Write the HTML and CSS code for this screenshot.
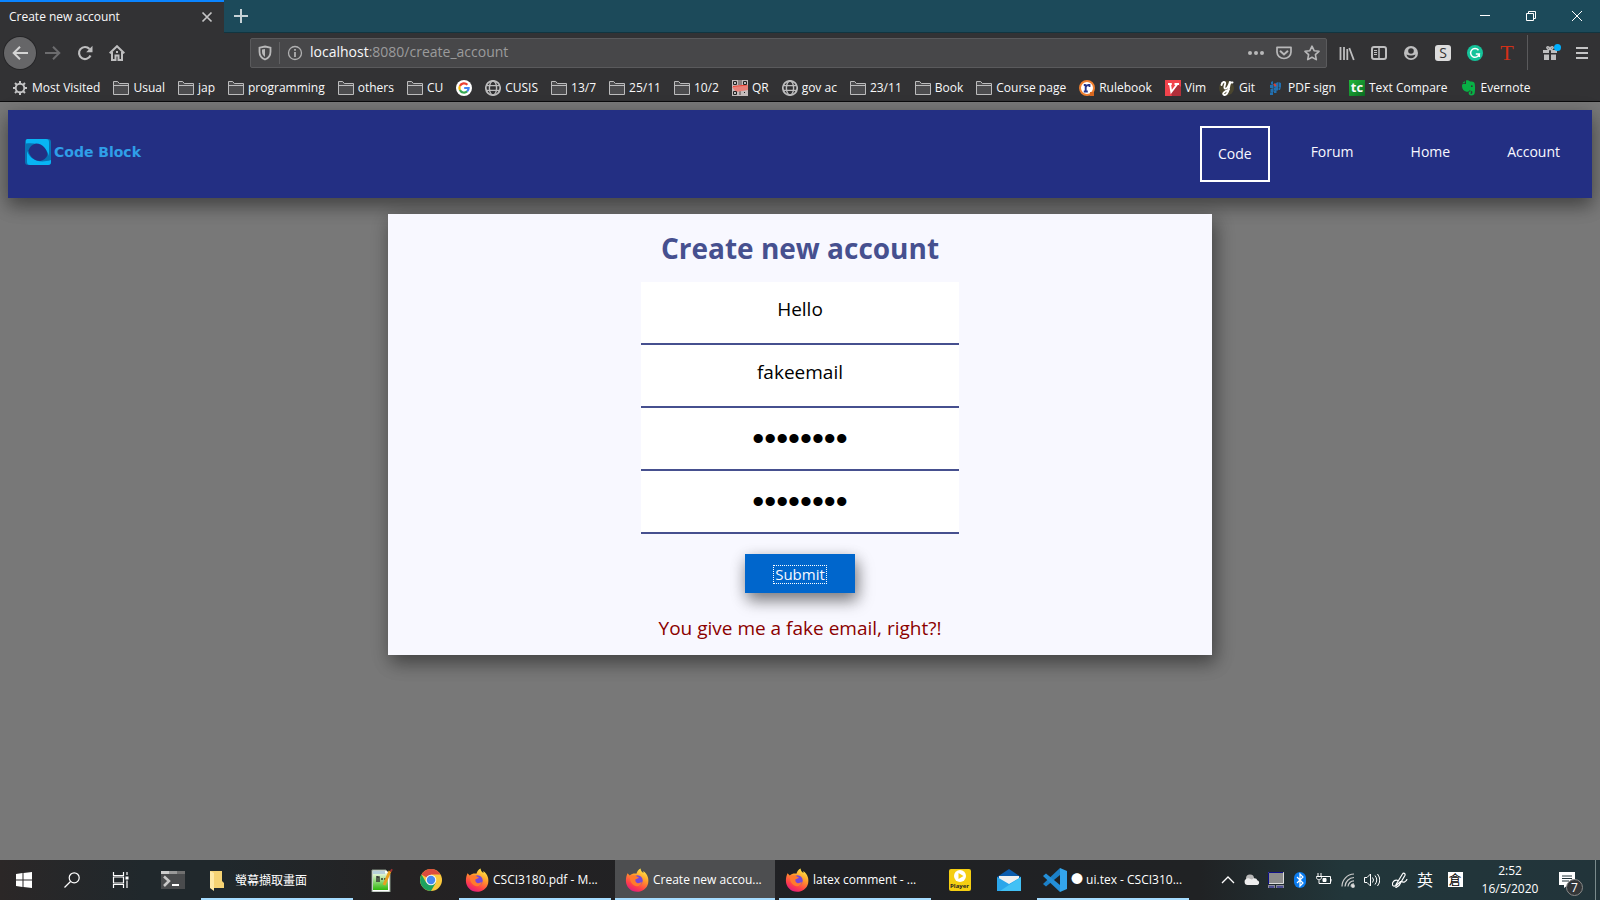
FILE: index.html
```html
<!DOCTYPE html>
<html lang="en">
<head>
<meta charset="utf-8">
<title>Create new account</title>
<link rel="stylesheet" href="styles.css">
</head>
<body>
<svg class="defs" aria-hidden="true">
  <defs>
    <linearGradient id="fxg" x1="0.8" y1="0" x2="0.3" y2="1"><stop offset="0" stop-color="#fff04a"/><stop offset=".4" stop-color="#ff9a2a"/><stop offset=".75" stop-color="#ff4048"/><stop offset="1" stop-color="#e01a80"/></linearGradient>
    <linearGradient id="npg" x1="0" y1="0" x2="0" y2="1"><stop offset="0" stop-color="#eef8e0"/><stop offset="1" stop-color="#2fb80c"/></linearGradient>
    <symbol id="folder" viewBox="0 0 16 16"><path d="M.5 14.500v-13h4.200l1.600 2h9.200v11z" fill="#4c4c4e" stroke="#bcbcbd"/><path d="M.5 5.500h15" stroke="#bcbcbd"/></symbol>
    <symbol id="globe" viewBox="0 0 16 16"><g fill="none" stroke="#bcbcbd" stroke-width="1.4"><circle cx="8" cy="8" r="7.2" stroke-width="1.7"/><ellipse cx="8" cy="8" rx="3.6" ry="7"/><path d="M1 5.6h14M1 10.4h14"/></g></symbol>
    <symbol id="firefox" viewBox="0 0 24 24"><path d="M2.500 5.200l2.300 2.200C7 5.500 9.300 5.200 11.400 5.700 12.200 3.200 13.500 1.500 15.700.6c-.1 2 .8 3 2.700 4.500.1-.6.1-1.300-.2-2 4.800 3.400 5.800 8.200 4.900 12.400-1.200 5-5.700 8.300-11 8.300C5.800 23.800.9 19 .9 12.800c0-2.800.6-5.400 1.600-7.600z" fill="url(#fxg)"/><circle cx="12.500" cy="12.500" r="5.200" fill="#7547d8"/><path d="M5 8.500c2-1.500 4.500-1.500 6.500-.3L14 9.500c-1 1-2.300 1.400-3.300 1.600-.8 1.500-.2 3.800 2 4.200 1.700.2 3-.8 4-1.200 0 3-3 4.500-5.200 4.100C7 17.500 4.500 13 5 8.500z" fill="#ff7a2c"/></symbol>
  </defs>
</svg>

<div class="browser">
  <div class="tabbar">
    <div class="tab"><span>Create new account</span>
      <button class="icon-btn" aria-label="Close tab"><svg width="12" height="12" viewBox="0 0 12 12"><path d="M1.500 1.500l9 9m0-9l-9 9" stroke="#c4c4c5" stroke-width="1.700"/></svg></button>
    </div>
    <button class="icon-btn new-tab" aria-label="New tab"><svg width="14" height="14" viewBox="0 0 14 14"><path d="M7 0v14M0 7h14" stroke="#c6d2d6" stroke-width="2"/></svg></button>
    <div class="window-controls">
      <button class="icon-btn" aria-label="Minimize"><svg width="10" height="10" viewBox="0 0 10 10"><path d="M0 4.500h10" stroke="#fff"/></svg></button>
      <button class="icon-btn" aria-label="Restore"><svg width="10" height="10" viewBox="0 0 10 10" fill="none" stroke="#fff"><path d="M.5 2.500h7v7h-7zM2.500 2V.5h7v7H8"/></svg></button>
      <button class="icon-btn" aria-label="Close"><svg width="10" height="10" viewBox="0 0 10 10"><path d="M0 0l10 10M10 0L0 10" stroke="#fff"/></svg></button>
    </div>
  </div>

  <div class="toolbar">
    <button class="icon-btn back" aria-label="Back"><svg width="16" height="14" viewBox="0 0 16 14" fill="none" stroke="#d4d4d4" stroke-width="2"><path d="M1.500 7H16M8 .8L1.700 7 8 13.200"/></svg></button>
    <button class="icon-btn" aria-label="Forward"><svg width="16" height="14" viewBox="0 0 16 14" fill="none" stroke="#6c6c6e" stroke-width="2"><path d="M0 7h14.500M8 .8L14.300 7 8 13.200"/></svg></button>
    <button class="icon-btn" aria-label="Reload"><svg width="16" height="16" viewBox="0 0 16 16"><path d="M13.500 10.500A6 6 0 1 1 12.500 4" fill="none" stroke="#bebebf" stroke-width="2.200"/><path d="M15.500 .8v6.400H9.200z" fill="#bebebf"/></svg></button>
    <button class="icon-btn" aria-label="Home"><svg width="16" height="16" viewBox="0 0 16 16"><path d="M.7 8.300L8 1.200l7.300 7.100" fill="none" stroke="#bebebf" stroke-width="2"/><path d="M3 7v8h3.500v-4.500h3V15H13V7" fill="none" stroke="#bebebf" stroke-width="2"/><path d="M7 6h2v2H7z" fill="#bebebf"/></svg></button>
    <div class="urlbar">
      <svg width="14" height="16" viewBox="0 0 14 16"><path d="M7 1.500l5.500 1.200v4c0 3.600-2 6.400-5.500 7.800-3.500-1.400-5.500-4.200-5.500-7.800v-4z" fill="none" stroke="#b8b8b9" stroke-width="1.800"/><path d="M7 4v8C4.800 10.600 4 9 4 6.600v-2z" fill="#b8b8b9"/></svg>
      <i class="url-sep"></i>
      <svg width="16" height="16" viewBox="0 0 16 16"><circle cx="8" cy="8" r="6.500" fill="none" stroke="#b0b0b1" stroke-width="1.300"/><path d="M7.100 7h1.800v5H7.100zM7.100 4h1.800v1.800H7.100z" fill="#b0b0b1"/></svg>
      <span class="url"><b>localhost</b>:8080/create_account</span>
      <button class="icon-btn" aria-label="Page actions"><svg width="16" height="16" viewBox="0 0 16 16" fill="#b8b8b9"><circle cx="2" cy="8" r="2"/><circle cx="8" cy="8" r="2"/><circle cx="14" cy="8" r="2"/></svg></button>
      <button class="icon-btn" aria-label="Save to Pocket"><svg width="16" height="16" viewBox="0 0 16 16" fill="none" stroke="#b8b8b9" stroke-width="1.700"><path d="M1 2.300h14v4.700a7 6.500 0 0 1-14 0z" stroke-linejoin="round"/><path d="M4.500 6.300L8 9.500l3.500-3.200" stroke-width="2" stroke-linecap="round"/></svg></button>
      <button class="icon-btn" aria-label="Bookmark this page"><svg width="16" height="16" viewBox="0 0 16 16"><path d="M8 1.200l2.100 4.500 4.900.6-3.600 3.400.9 4.900L8 12.200l-4.300 2.400.9-4.900L1 6.300l4.900-.6z" fill="none" stroke="#b8b8b9" stroke-width="1.600" stroke-linejoin="round"/></svg></button>
    </div>
    <div class="extensions">
      <button class="icon-btn" aria-label="Library"><svg width="16" height="16" viewBox="0 0 16 16" stroke="#bebebf" stroke-width="1.800"><path d="M1.500 2v13M5 2v13M8.300 4v11M10.300 3l4.500 12"/></svg></button>
      <button class="icon-btn" aria-label="Sidebars"><svg width="16" height="14" viewBox="0 0 16 14" fill="none" stroke="#bebebf"><rect x="1" y="1" width="14" height="12" rx="2" stroke-width="2"/><path d="M8 1v12" stroke-width="1.500"/><path d="M3 4.500h3M3 6.500h3M3 8.500h3"/></svg></button>
      <button class="icon-btn" aria-label="Account"><svg width="14" height="14" viewBox="0 0 14 14"><circle cx="7" cy="7" r="7" fill="#bebebf"/><circle cx="7" cy="5" r="2.800" fill="#323234"/><path d="M2.500 8.500c2.500 1.400 6.500 1.400 9 0-.4 2.400-2 3.700-4.500 3.700s-4.100-1.300-4.500-3.700z" fill="#323234"/></svg></button>
      <button class="icon-btn ext-s" aria-label="S extension">S</button>
      <button class="icon-btn" aria-label="Grammar"><svg width="16" height="16" viewBox="0 0 16 16"><circle cx="8" cy="8" r="8" fill="#15c39a"/><path d="M11.500 5.200A4.400 4.400 0 1 0 12.300 9H8.800M12.300 8.500v3.500" fill="none" stroke="#fff" stroke-width="1.500"/></svg></button>
      <button class="icon-btn ext-t" aria-label="T extension">T</button>
    </div>
    <div class="menus">
      <button class="icon-btn gift" aria-label="What's new"><svg width="16" height="16" viewBox="0 0 16 16"><path d="M1 5h6v3H1zM9 5h6v3H9zM2 9.500h5V15H2zM9 9.500h5V15H9z" fill="#bebebf"/><path d="M7.500 5C4 4 4.500 1.500 6 1.800 7.500 2 8 5 8 5s.5-3 2-3.200C11.500 1.500 12 4 8.500 5" stroke="#bebebf" fill="none" stroke-width="1.500"/></svg><i class="dot"></i></button>
      <button class="icon-btn" aria-label="Menu"><svg width="12" height="12" viewBox="0 0 12 12"><path d="M0 1h12M0 6h12M0 11h12" stroke="#c4c4c5" stroke-width="2"/></svg></button>
    </div>
  </div>

  <nav class="bookmarks" aria-label="Bookmarks">
    <a href="#"><svg viewBox="0 0 16 16"><circle cx="8" cy="8" r="4.300" fill="none" stroke="#c4c4c5" stroke-width="1.900"/><path d="M8 1v2.500M8 12.500V15M1 8h2.500M12.500 8H15M3 3l1.900 1.900M11.100 11.100L13 13M13 3l-1.900 1.900M4.900 11.100L3 13" stroke="#c4c4c5" stroke-width="2"/></svg>Most Visited</a>
    <a href="#"><svg><use href="#folder"/></svg>Usual</a>
    <a href="#"><svg><use href="#folder"/></svg>jap</a>
    <a href="#"><svg><use href="#folder"/></svg>programming</a>
    <a href="#"><svg><use href="#folder"/></svg>others</a>
    <a href="#"><svg><use href="#folder"/></svg>CU</a>
    <a href="#" aria-label="Google"><svg viewBox="0 0 16 16"><circle cx="8" cy="8" r="8" fill="#fff"/><g fill="none" stroke-width="2.200"><path d="M11.400 4.800A4.600 4.600 0 0 0 3.900 6" stroke="#ea4335"/><path d="M3.900 6a4.600 4.600 0 0 0 0 4.100" stroke="#fbbc05"/><path d="M3.900 10a4.600 4.600 0 0 0 7.200 1.400" stroke="#34a853"/><path d="M11.100 11.400A4.600 4.600 0 0 0 12.600 8H8.200" stroke="#4285f4"/></g></svg></a>
    <a href="#"><svg><use href="#globe"/></svg>CUSIS</a>
    <a href="#"><svg><use href="#folder"/></svg>13/7</a>
    <a href="#"><svg><use href="#folder"/></svg>25/11</a>
    <a href="#"><svg><use href="#folder"/></svg>10/2</a>
    <a href="#"><svg viewBox="0 0 16 16"><path d="M0 0h16v16H0z" fill="#c4bcbc"/><path d="M6 0h4v5H6zM3 7h4v3H3zM7 11h2v4H7z" fill="#8a8080"/><path d="M0 7l16-2v5L4 12z" fill="#e88078"/><path d="M1 6.500l14-1.500" stroke="#f04030"/><g fill="#eee" stroke="#222"><path d="M1.500 1.500h3v3h-3zM11.500 1.500h3v3h-3zM1.500 11.500h3v3h-3z"/></g><path d="M2.500 2.500h1v1h-1zM12.500 2.500h1v1h-1zM2.500 12.500h1v1h-1zM12 12h1v1h-1z" fill="#222"/></svg>QR</a>
    <a href="#"><svg><use href="#globe"/></svg>gov ac</a>
    <a href="#"><svg><use href="#folder"/></svg>23/11</a>
    <a href="#"><svg><use href="#folder"/></svg>Book</a>
    <a href="#"><svg><use href="#folder"/></svg>Course page</a>
    <a href="#"><svg viewBox="0 0 16 16"><circle cx="8" cy="8" r="7" fill="#fff" stroke="#f08030" stroke-width="2"/><path d="M11 12h4v4h-4z" fill="#d86820"/><path d="M6.700 12V4.500M4.800 5h2M4.800 11.500h4M6.800 7c.8-2 2.500-2.300 3.700-2v2" fill="none" stroke="#27368c" stroke-width="1.900"/></svg>Rulebook</a>
    <a href="#"><svg viewBox="0 0 16 16"><path d="M0 0h16v16H0z" fill="#f2434c"/><path d="M13 4l3 3v9H7l-1-3z" fill="#b02f3a"/><path d="M3 4h3.800M5 4l1.300 8L12 4.500M9.500 4H14" fill="none" stroke="#fff" stroke-width="1.900"/></svg>Vim</a>
    <a href="#"><svg viewBox="0 0 16 16"><circle cx="7.500" cy="8" r="7.500" fill="#4a452e"/><path d="M2.500 5C3 1.500 6.500 1 6.200 3.500c-.2 2-1.700 4.200-.3 5 2 .8 4-2.500 5-6.500M13.500 2.500c-3-.8-3 3-3.700 6C9 13 7 15.500 5 14.800c-2-.8-.3-3.500 5-5.200" fill="none" stroke="#fff" stroke-width="1.900" stroke-linecap="round"/></svg>Git</a>
    <a href="#"><svg viewBox="0 0 16 16"><path d="M3 2l2-1v3H3zM6 4l4-2v5H6zM10.500 2l2.500 1v4h-2.500zM2 5l3.500-1v4H2zM6 7.500l4-1v4H6zM10.500 7.500L13 7l-1 3h-1.500zM2.500 9l3-1v4h-3zM6 11l2.500-1v3H6zM2 12.500l3-.5v3H2z" fill="#2270b0"/><path d="M6 4l2 2" stroke="#e04030" stroke-width="1.800"/></svg>PDF sign</a>
    <a href="#"><span class="tc">tc</span>Text Compare</a>
    <a href="#"><svg viewBox="0 0 16 16"><path d="M5 .5C7 0 8.500.8 9 1.600c2 .1 4 .3 4.500 1.300.7 2 .7 6.600.3 9.600-.3 2.200-1.300 3-3.300 3-2.300 0-3.200-1.500-2.800-3 .3-1 1.300-1.500 2.500-1.300v1.300c-1 .1-1.200 1.200 0 1.300 1.200 0 1.300-1 1-2.600-1-.6-2-.7-3-.8-.5 1.300-1.500 1.500-2.500 1.300C2.500 11.200 1 9 1 6c0-1.500.5-2 1.500-2H5z" fill="#08b045"/><path d="M3.800 1L1.300 3.300h2.500z" fill="#08b045"/><circle cx="10.800" cy="6.200" r=".9" fill="#323234"/></svg>Evernote</a>
  </nav>
</div>

<main class="page">
  <header class="site-header">
    <a class="logo" href="#"><svg width="26" height="26" viewBox="0 0 26 26"><rect width="26" height="26" rx="3" fill="#0873b4"/><path d="M2 0h19a3 3 0 0 1 3 3v14C22 8 13 3 1 4.500V1zM2 12v11a3 3 0 0 0 3 3h18a3 3 0 0 0 3-3v-2C13 25 5 20 2 12z" fill="#08b4f4"/><path d="M11 4.500c7 0 11 6 11.500 11.500-1 3-3.500 5-7 6C8 22 4 16 3.500 11.500 4.500 8 7 5.500 11 4.500z" fill="#232f83"/></svg><span>Code Block</span></a>
    <nav class="site-nav">
      <a class="active" href="#">Code</a><a href="#">Forum</a><a href="#">Home</a><a href="#">Account</a>
    </nav>
  </header>
  <form class="card">
    <h1>Create new account</h1>
    <input type="text" aria-label="User name" value="Hello">
    <input type="text" aria-label="Email" value="fakeemail">
    <input type="password" aria-label="Password" value="password">
    <input type="password" aria-label="Confirm password" value="password">
    <button class="submit" type="button"><span>Submit</span></button>
    <p class="error">You give me a fake email, right?!</p>
  </form>
</main>

<footer class="taskbar">
  <div class="system">
    <button class="sys" aria-label="Start"><svg width="16" height="16" viewBox="0 0 16 16" fill="#fff"><path d="M0 2l6.500-1v6.500H0zM7.500 1L16 0v7.500H7.500zM0 8.500h6.500V15L0 14zM7.500 8.500H16V16l-8.500-1z"/></svg></button>
    <button class="sys" aria-label="Search"><svg width="16" height="16" viewBox="0 0 16 16" fill="none" stroke="#fff" stroke-width="1.200"><circle cx="10.200" cy="5.800" r="5"/><path d="M6.500 9.500L.5 15.500"/></svg></button>
    <button class="sys" aria-label="Task view"><svg width="17" height="16" viewBox="0 0 17 16" fill="none" stroke="#fff" stroke-width="1.200"><path d="M1.500 0v3.500h10V0M1.500 16v-3.500h10V16M1.500 5h10v6h-10zM15 0v3M15 8.500V16"/><path d="M13.500 4.500h3v3h-3z" fill="#fff" stroke="none"/></svg></button>
  </div>
  <button class="app" aria-label="Terminal"><svg width="24" height="18" viewBox="0 0 24 18"><path d="M0 0h24v18H0z" fill="#494b4d"/><path d="M0 0h8v3H0z" fill="#ccc"/><path d="M8 0h8v3H8z" fill="#999"/><path d="M16 0h8v3h-8z" fill="#707070"/><path d="M3 5.500L8 10l-5 5" fill="none" stroke="#c8c8c8" stroke-width="2.500"/><path d="M11 14h7" stroke="#fff" stroke-width="2"/></svg></button>
  <button class="task"><svg width="24" height="24" viewBox="0 0 24 24"><path d="M3 3h12v10l2 2v5H5z" fill="#f6d374"/><path d="M3 3l4 2v18l-4-3z" fill="#ffe9a6"/></svg><span class="cjk">螢幕擷取畫面</span></button>
  <button class="app" aria-label="Notepad++"><svg width="24" height="24" viewBox="0 0 24 24"><path d="M2 2h14l4 4v18H2z" fill="#fff" stroke="#8a9a8a"/><path d="M3 5h15v17H3z" fill="url(#npg)"/><path d="M3 3h12v3H3z" fill="#b8d0da"/><path d="M7 8v6M7 9h2v5M11 11h2M14 11h2" stroke="#333" fill="none" stroke-width="1.500"/><path d="M20 3l-6 14" stroke="#e8a020" stroke-width="3"/><path d="M20.500 2l1.500 1" stroke="#a03030" stroke-width="3"/></svg></button>
  <button class="app" aria-label="Chrome"><svg width="22" height="22" viewBox="0 0 22 22"><circle cx="11" cy="11" r="11" fill="#fbc93d"/><path d="M11 11L1.500 5.500A11 11 0 0 1 20.500 5.500H11z" fill="#dd4b3e"/><path d="M1.500 5.500A11 11 0 0 0 11 22l4.800-8.300L11 11 6.300 13.800z" fill="#1da15f"/><circle cx="11" cy="11" r="5.300" fill="#f5f5f5"/><circle cx="11" cy="11" r="4.200" fill="#4688f0"/></svg></button>
  <button class="task"><svg width="24" height="24"><use href="#firefox"/></svg><span>CSCI3180.pdf - M...</span></button>
  <button class="task current"><svg width="24" height="24"><use href="#firefox"/></svg><span>Create new accou...</span></button>
  <button class="task"><svg width="24" height="24"><use href="#firefox"/></svg><span>latex comment - ...</span></button>
  <button class="app" aria-label="Player"><span class="player"><svg width="14" height="14" viewBox="0 0 14 14"><circle cx="7" cy="7" r="6" fill="#fff"/><path d="M5.500 4l5 3-5 3z" fill="#f5ce12"/></svg>Player</span></button>
  <button class="app" aria-label="Mail"><svg width="24" height="22" viewBox="0 0 24 22"><path d="M0 8L12 0l12 8v14H0z" fill="#0b5cad"/><path d="M2 7h20v10H2z" fill="#f0f0f0"/><path d="M0 8l12 7L24 8v14H0z" fill="#2ba6ea"/><path d="M24 8v14H3z" fill="#42c1f5"/></svg></button>
  <button class="task"><svg width="24" height="24" viewBox="0 0 24 24"><path d="M17 0l7 3v18l-7 3z" fill="#33a5ec"/><path d="M17 0v7L3 18.500 0 16z" fill="#1c80c8"/><path d="M3 5.500L17 17v7L0 8z" fill="#248fd8"/></svg><span>● ui.tex - CSCI310...</span></button>

  <div class="tray">
    <button class="tray-btn" aria-label="Show hidden icons"><svg viewBox="0 0 16 16"><path d="M2 11l6-6 6 6" fill="none" stroke="#fff" stroke-width="1.300"/></svg></button>
    <button class="tray-btn" aria-label="OneDrive"><svg viewBox="0 0 16 16"><circle cx="6" cy="6.500" r="4" fill="#b8b8b8"/><path d="M3.500 13a3.300 3.300 0 0 1-.3-6.500C5 5.500 7 7.500 8 7.500c2-2.500 5-1 5.200.7A2.500 2.500 0 0 1 13.500 13z" fill="#eee"/></svg></button>
    <button class="tray-btn" aria-label="Device"><svg viewBox="0 0 16 16"><path d="M.5.500h15v11H.5z" fill="#8c8c8c" stroke="#ddd"/><path d="M.5 12V.500H15" fill="none" stroke="#10108a"/><path d="M0 13h7v3H0zM8 13h8v3H8z" fill="#8c8c9c"/><path d="M1 15h5M9 15h6" stroke="#10108a"/></svg></button>
    <button class="tray-btn" aria-label="Bluetooth"><svg viewBox="0 0 16 16"><rect x="2" width="12" height="16" rx="6" fill="#0a7cf0"/><path d="M5 5l6 6-3 3V2l3 3-6 6" fill="none" stroke="#fff" stroke-width="1.200"/></svg></button>
    <button class="tray-btn" aria-label="Battery"><svg viewBox="0 0 16 16" fill="none" stroke="#fff"><path d="M5 4.500h9.500v7h-9.500M15 7v2.500M2 1v3M5 1v3M.5 4.500h5c0 3-1 3-2.500 3s-2.500 0-2.500-3M3 8v3.500h2"/><path d="M7 6.500h3v3H7z" fill="#fff"/></svg></button>
    <button class="tray-btn" aria-label="Network"><svg viewBox="0 0 16 16" fill="none" stroke="#ccc" stroke-width="1.200"><path d="M2 14.500A12.500 12.500 0 0 1 14 2M5 14.500A9.500 9.500 0 0 1 14 5.500M8 14.500A6 6 0 0 1 14 8.800M11 14.500A3 3 0 0 1 14 11.800"/><circle cx="13" cy="14" r="1.300" fill="#fff"/></svg></button>
    <button class="tray-btn" aria-label="Volume"><svg viewBox="0 0 16 16" fill="none" stroke="#fff"><path d="M.5 5.500h2.500L6.500 2v12L3 10.500H.5zM8.500 5.500q2 2.500 0 5M11 3.500q3.500 4.500 0 9M13.500 2q4.500 6 0 12"/></svg></button>
    <button class="tray-btn wide" aria-label="Pen"><svg viewBox="0 0 16 16" fill="none" stroke="#fff" stroke-width="1.200"><path d="M4 12.500L10.500 2c1-1.500 3-.5 2.500 1.200L7 13.500l-3 2zM6 8.500C1 7-1 13 1.500 14c3 1 5-3 7-4.500 1.500-1 2 1.500 4 .5 1.500-1 2.500-2 2.500-3"/></svg></button>
    <button class="ime" aria-label="Input language"><span>英</span></button>
    <button class="ime" aria-label="Input method"><span class="boxed">倉</span></button>
    <time class="clock"><span>2:52</span><span>16/5/2020</span></time>
    <button class="notice" aria-label="Notifications"><svg width="16" height="16" viewBox="0 0 16 16"><path d="M0 0h16v13H9l-4 3v-3H0z" fill="#fff"/><path d="M3 4h10M3 6.500h10M3 9h7" stroke="#23343a"/></svg><span class="badge">7</span></button>
  </div>
</footer>
</body>
</html>
```
FILE: styles.css
```css
* { box-sizing: border-box; }
body {
  margin: 0;
  min-height: 100vh;
  display: flex;
  flex-direction: column;
  background: #787878;
  font-family: "Open Sans", "Noto Sans", "Noto Sans CJK TC", sans-serif;
  overflow: hidden;
}
button { font: inherit; border: 0; background: none; padding: 0; color: inherit; }
a { color: inherit; text-decoration: none; }
svg { flex: none; }
.defs { position: absolute; width: 0; height: 0; }
.icon-btn { display: flex; align-items: center; justify-content: center; width: 32px; height: 32px; }

/* Browser chrome */
.browser { background: #323234; color: #f9f9fa; border-bottom: 1px solid #0c0c0d; }
.tabbar { display: flex; height: 33px; background: #1c4a5a; box-shadow: inset 0 -1px #113540; }
.tab {
  display: flex; align-items: center; justify-content: space-between;
  width: 224px; padding: 0 0 2px 9px; font-size: 12px;
  background: #323234; border-top: 2px solid #0a84ff;
}
.tab .icon-btn { width: 34px; }
.new-tab { margin-left: 1px; }
.window-controls { display: flex; margin-left: auto; }
.window-controls .icon-btn { width: 46px; }

.toolbar { display: flex; align-items: center; height: 41px; padding: 0 2px 2px 4px; }
.toolbar .back { background: #666668; border-radius: 50%; box-shadow: 0 0 0 1px #262628; margin-right: 1px; }
.urlbar {
  flex: 1; display: flex; align-items: center; gap: 7px;
  height: 30px; margin-left: 117px; padding-left: 7px;
  background: #474749; border: 1px solid #5a5a5c; border-radius: 2px;
}
.url-sep { width: 1px; height: 22px; background: #606062; }
.url { flex: 1; font-size: 14px; line-height: 28px; padding-bottom: 2px; color: #9b9b9c; }
.url b { font-weight: 400; color: #f9f9fa; }
.urlbar .icon-btn { width: 21px; }
.urlbar .icon-btn:last-child { margin-right: 4px; }
.extensions { display: flex; align-items: center; padding: 0 4px; }
.ext-s { width: 16px; height: 16px; margin: 0 8px; border-radius: 3px; background: #dcdcdc; color: #333; font-size: 14px; }
.ext-t { color: #d23018; font: 22px "Liberation Serif", serif; }
.menus { display: flex; height: 35px; align-items: center; padding-left: 6px; border-left: 1px solid #5a5a5c; }
.gift { position: relative; }
.dot { position: absolute; top: 7px; right: 5px; width: 7px; height: 7px; border-radius: 50%; background: #00b0ff; }

.bookmarks { display: flex; align-items: center; gap: 13px; height: 27px; padding: 0 12px; font-size: 12px; white-space: nowrap; }
.bookmarks a { display: flex; align-items: center; gap: 4px; }
.bookmarks svg { width: 16px; height: 16px; }
.tc { width: 16px; height: 16px; background: linear-gradient(135deg, #20b83a, #0b6b22); font: bold 13px/15px "Open Sans", sans-serif; text-align: center; }

/* Web page */
.page { flex: 1; padding: 8px; }
.site-header {
  display: flex; justify-content: space-between; align-items: flex-start;
  padding: 16px; background: #232f83; color: #f8f8ff;
  box-shadow: 0 8px 16px rgba(0, 0, 0, .3), 0 6px 20px rgba(0, 0, 0, .2);
}
.logo { display: flex; align-items: center; gap: 3px; margin: 13px 0 0 1px; color: #2f9fe8; font: bold 14px "DejaVu Sans", sans-serif; }
.site-nav { display: flex; align-items: flex-start; gap: 25px; font-size: 14px; line-height: 20px; }
.site-nav a { padding: 16px; }
.site-nav .active { border: 2px solid #fff; }
.card {
  display: flex; flex-direction: column; align-items: center;
  width: 52%; margin: 16px auto; padding: 14px 0 12px;
  background: #f8f8ff;
  box-shadow: 3px 8px 16px rgba(0, 0, 0, .3), 3px 6px 20px rgba(0, 0, 0, .2);
}
.card h1 { margin: 0 0 14px; font-size: 28px; line-height: 40px; color: #46508f; }
.card input {
  width: 318px; height: 63px; padding: 10px 20px 18px;
  border: 0; border-bottom: 2px solid #46508f; border-radius: 0; background: #fff; outline: 0;
  font: 19px "Open Sans", sans-serif; text-align: center; color: #000;
}
.card input[type="password"] { padding: 12px 20px; font: 34px "Liberation Sans", sans-serif; }
.submit {
  width: 110px; height: 39px; margin: 20px 0; background: #0066cc; color: #f8f8ff; font-size: 15px;
  box-shadow: 3px 8px 16px rgba(0, 0, 0, .4), 0 4px 16px rgba(0, 0, 0, .2);
}
.submit span { display: inline-block; line-height: 17px; border: 1px dotted #fff; padding: 0 1px; }
.error { margin: 0; font-size: 19px; line-height: 30px; color: #8b0000; }

/* Desktop taskbar */
.taskbar {
  display: flex; height: 40px; color: #fff; font-size: 12px;
  background: linear-gradient(90deg, #2b2727, #20282c 9%, #20282c 14%, #242223 25%, #202124 50%, #202224 75%, #22363a 84%, #22343a);
}
.system { display: flex; width: 148px; }
.sys { width: 48px; display: flex; align-items: center; justify-content: center; }
.app { width: 49px; display: flex; align-items: center; justify-content: center; }
.task { position: relative; width: 160px; display: flex; align-items: center; gap: 4px; padding-left: 10px; white-space: nowrap; }
.task span { padding-bottom: 2px; }
.task::after { content: ""; position: absolute; left: 4px; right: 4px; bottom: 0; height: 2px; background: #a5dcff; }
.current { background: #4d4e50; }
.current::after { left: 0; right: 0; }
.cjk { font-family: "Noto Sans CJK TC", sans-serif; }
.player { display: flex; flex-direction: column; align-items: center; width: 22px; height: 22px; border-radius: 2px; background: #f5ce12; color: #222; font: bold 6px/7px "Open Sans", sans-serif; }
.tray { display: flex; align-items: center; margin-left: auto; padding-right: 4px; }
.tray-btn { width: 24px; height: 40px; display: flex; align-items: center; justify-content: center; }
.tray-btn.wide { width: 26px; padding-left: 6px; }
.tray-btn svg { width: 16px; height: 16px; }
.ime { width: 30px; padding-bottom: 2px; font: 16px/20px "Noto Sans CJK TC", sans-serif; display: flex; justify-content: center; }
.boxed { width: 15px; height: 15px; background: #fff; color: #000; font: 13px/14px "Noto Sans CJK TC", sans-serif; }
.clock { display: flex; flex-direction: column; width: 80px; text-align: center; line-height: 18px; }
.notice { position: relative; width: 46px; height: 40px; display: flex; align-items: center; padding-left: 9px; border-right: 1px solid #7a8a8c; }
.badge { position: absolute; left: 16px; top: 19px; width: 17px; height: 17px; border-radius: 50%; background: #333638; border: 1px solid #8a8a8a; font-size: 12px; line-height: 15px; text-align: center; }
```
